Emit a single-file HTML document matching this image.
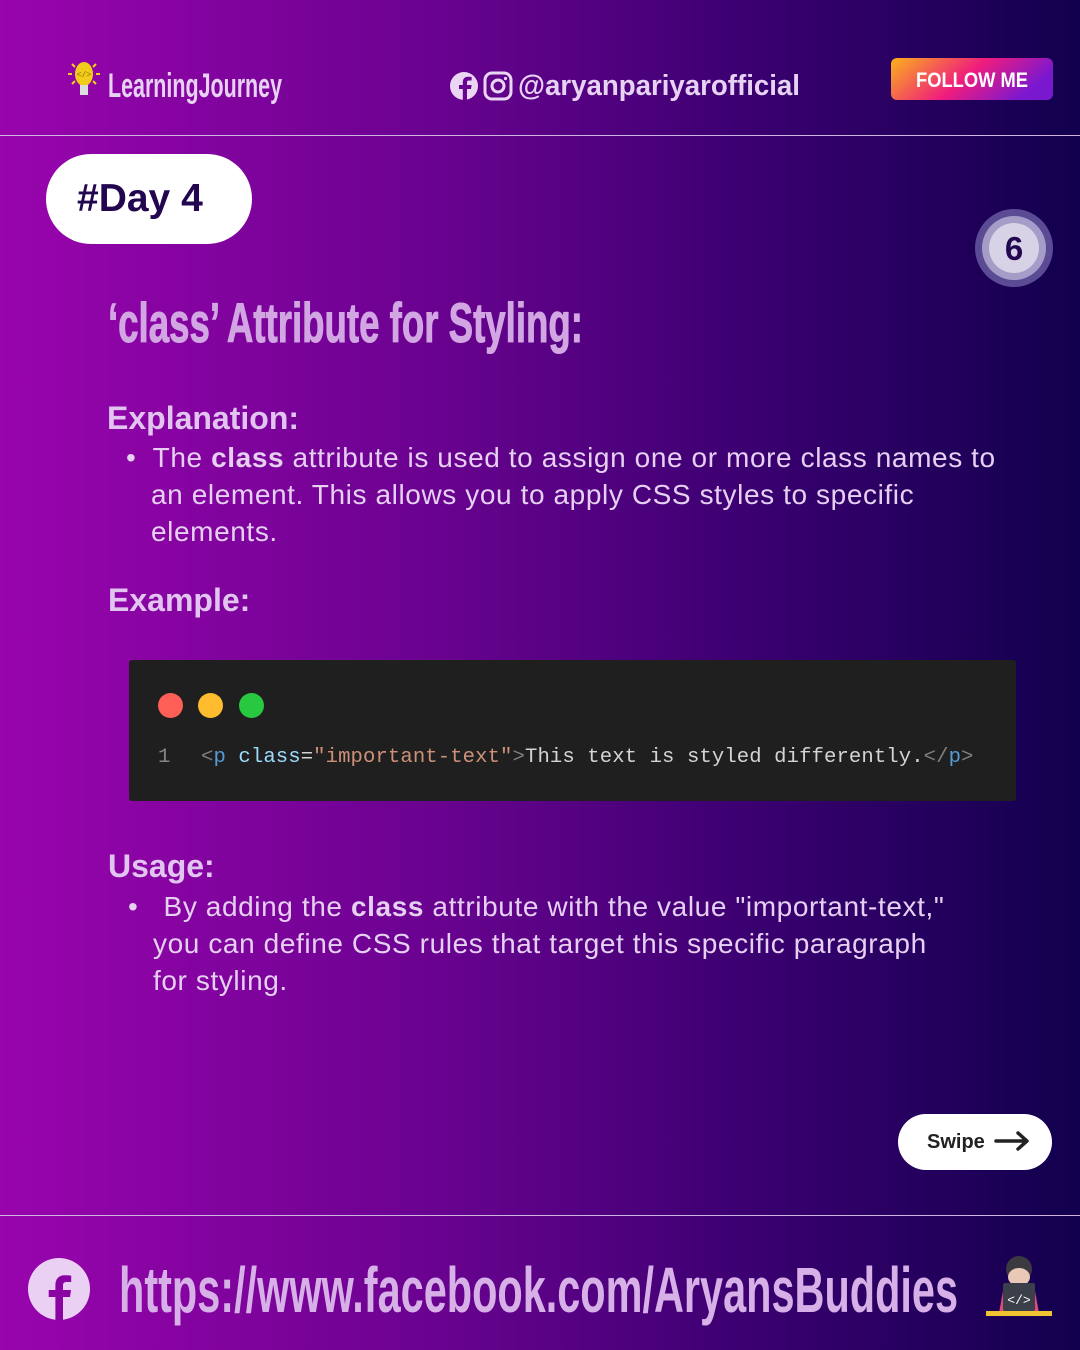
<!DOCTYPE html>
<html><head><meta charset="utf-8"><style>
*{margin:0;padding:0;box-sizing:border-box}
body{width:1080px;height:1350px;overflow:hidden;font-family:"Liberation Sans",sans-serif;background:linear-gradient(90deg,#9904ad 0%,#6a0290 40%,#3a0070 70%,#11004d 100%);position:relative;color:#e6cdf0}
.a{position:absolute}
.line{position:absolute;left:0;width:1080px;height:1px;background:#cfb6e0}
.h{font-weight:bold;font-size:32px;color:#e2c4f0}
.p{font-size:28px;line-height:37px;color:#e6d0f2;letter-spacing:0.6px}
</style></head><body>
<svg class="a" style="left:0;top:0" width="1080" height="1350">
 <g transform="translate(84,78)">
  <g stroke="#f4d21a" stroke-width="2"><line x1="-16" y1="-4" x2="-12" y2="-4"/><line x1="12" y1="-4" x2="16" y2="-4"/><line x1="-12" y1="-14" x2="-9" y2="-11"/><line x1="12" y1="-14" x2="9" y2="-11"/><line x1="-12" y1="6" x2="-9" y2="3"/><line x1="12" y1="6" x2="9" y2="3"/></g>
  <ellipse cx="0" cy="-4" rx="9" ry="12" fill="#f2cc1a"/>
  <rect x="-4" y="7" width="8" height="10" fill="#ddd"/>
  <text x="0" y="-1" font-size="8" fill="#8a6a00" text-anchor="middle" font-family="Liberation Mono">&lt;/&gt;</text>
 </g>
 <text x="108" y="97" font-family="Liberation Sans Narrow,Liberation Sans,sans-serif" font-weight="bold" font-size="34" fill="#e8d2f4" textLength="174" lengthAdjust="spacingAndGlyphs">LearningJourney</text>
 <circle cx="464" cy="86" r="14" fill="#ead6f4"/>
 <path d="M467 100 v-11 h4 l0.6-4 h-4.6 v-2.5 c0-1.2 0.4-2 2-2 h2.6 v-3.6 c-0.5 0 -2 -0.2 -3.6 -0.2 c-3.4 0 -5.2 2 -5.2 5.6 v2.7 h-3.8 v4 h3.8 v11 z" fill="#6a0290"/>
 <rect x="485" y="73" width="26" height="26" rx="7" fill="none" stroke="#ead6f4" stroke-width="3"/>
 <circle cx="498" cy="86" r="6" fill="none" stroke="#ead6f4" stroke-width="3"/>
 <circle cx="505.5" cy="78.5" r="1.6" fill="#ead6f4"/>
 <text x="518" y="95" font-family="Liberation Sans,sans-serif" font-weight="bold" font-size="29" fill="#e8d2f4" textLength="282" lengthAdjust="spacingAndGlyphs">@aryanpariyarofficial</text>
 <defs><linearGradient id="fg" x1="0" x2="1" y1="0" y2="0.3"><stop offset="0" stop-color="#fbb21a"/><stop offset="0.55" stop-color="#ef1c7d"/><stop offset="1" stop-color="#7a18d0"/></linearGradient></defs>
 <rect x="891" y="58" width="162" height="42" rx="6" fill="url(#fg)"/>
 <text x="972" y="87" text-anchor="middle" font-family="Liberation Sans Narrow,Liberation Sans,sans-serif" font-weight="bold" font-size="21" fill="#fff" textLength="112" lengthAdjust="spacingAndGlyphs">FOLLOW ME</text>
 <circle cx="1014" cy="248" r="39" fill="#5b4a94"/>
 <circle cx="1014" cy="248" r="32" fill="#a69cc8"/>
 <circle cx="1014" cy="248" r="25" fill="#d8d2e6"/>
 <text x="1014" y="260" text-anchor="middle" font-weight="bold" font-size="33" fill="#22064f">6</text>
 <text x="108" y="342" font-family="Liberation Sans Narrow,Liberation Sans,sans-serif" font-weight="bold" font-size="56" fill="#d2a6e2" stroke="#d2a6e2" stroke-width="1" textLength="475" lengthAdjust="spacingAndGlyphs">‘class’ Attribute for Styling:</text>
 <circle cx="59" cy="1289" r="31" fill="#ead0f2"/>
 <path d="M63 1320 v-23 h7 l1-7 h-8 v-4.5 c0-2 0.7-3.5 3.6-3.5 h4.6 v-6.3 c-0.9-0.1-3.6-0.4-6.4-0.4 c-6 0-9.4 3.6-9.4 10 v4.7 h-6.7 v7 h6.7 v23 z" fill="#8a04a4"/>
 <text x="119" y="1312" font-family="Liberation Sans Narrow,Liberation Sans,sans-serif" font-weight="bold" font-size="64" fill="#d6b0e6" textLength="839" lengthAdjust="spacingAndGlyphs">https://www.facebook.com/AryansBuddies</text>
 <g transform="translate(1019,1285)">
  <ellipse cx="0" cy="-16" rx="13" ry="13" fill="#3a3a40"/>
  <ellipse cx="0" cy="-8" rx="11" ry="9" fill="#e9c9b6"/>
  <path d="M-20 28 l4 -22 h32 l4 22 z" fill="#e04a76"/>
  <rect x="-16" y="-2" width="32" height="28" rx="2" fill="#3b3f4a"/>
  <text x="0" y="19" text-anchor="middle" font-size="13" fill="#fff" font-family="Liberation Mono">&lt;/&gt;</text>
  <rect x="-33" y="26" width="66" height="5" fill="#f1c232"/>
 </g>
</svg>
<div class="line" style="top:135px"></div>
<div class="line" style="top:1215px"></div>
<div class="a" style="left:46px;top:154px;width:206px;height:90px;border-radius:45px;background:#fff;color:#22064f;font-weight:bold;font-size:39px;line-height:90px;padding-left:31px">#Day 4</div>
<div class="a h" style="left:107px;top:400px">Explanation:</div>
<div class="a p" style="left:126px;top:439px;width:940px">•&nbsp; The <b>class</b> attribute is used to assign one or more class names to<br><span style="padding-left:25px">an element. This allows you to apply CSS styles to specific</span><br><span style="padding-left:25px">elements.</span></div>
<div class="a h" style="left:108px;top:582px">Example:</div>
<div class="a" style="left:129px;top:660px;width:887px;height:141px;background:#1f1f1f;border-radius:3px">
 <div class="a" style="left:29px;top:33px;width:25px;height:25px;border-radius:50%;background:#fe5f57"></div>
 <div class="a" style="left:69px;top:33px;width:25px;height:25px;border-radius:50%;background:#febc2e"></div>
 <div class="a" style="left:110px;top:33px;width:25px;height:25px;border-radius:50%;background:#28c840"></div>
 <div class="a" style="left:29px;top:86px;font-family:'Liberation Mono',monospace;font-size:20.6px;color:#858585">1</div>
 <div class="a" style="left:72px;top:86px;font-family:'Liberation Mono',monospace;font-size:20.6px;color:#d4d4d4;white-space:pre;letter-spacing:0.1px"><span style="color:#808080">&lt;</span><span style="color:#569cd6">p</span> <span style="color:#9cdcfe">class</span>=<span style="color:#ce9178">"important-text"</span><span style="color:#808080">&gt;</span>This text is styled differently.<span style="color:#808080">&lt;/</span><span style="color:#569cd6">p</span><span style="color:#808080">&gt;</span></div>
</div>
<div class="a h" style="left:108px;top:848px">Usage:</div>
<div class="a p" style="left:128px;top:888px;width:940px">•&nbsp;&nbsp; By adding the <b>class</b> attribute with the value "important-text,"<br><span style="padding-left:25px">you can define CSS rules that target this specific paragraph</span><br><span style="padding-left:25px">for styling.</span></div>
<div class="a" style="left:898px;top:1114px;width:154px;height:56px;border-radius:28px;background:#fff;color:#222;font-weight:bold;font-size:20px;line-height:56px;padding-left:29px">Swipe</div>
<svg class="a" style="left:0;top:0;pointer-events:none" width="1080" height="1350"><path d="M996 1141 h30 M1018 1133 l9 8 l-9 8" stroke="#222" stroke-width="3.5" fill="none" stroke-linecap="round" stroke-linejoin="round"/></svg>
</body></html>
